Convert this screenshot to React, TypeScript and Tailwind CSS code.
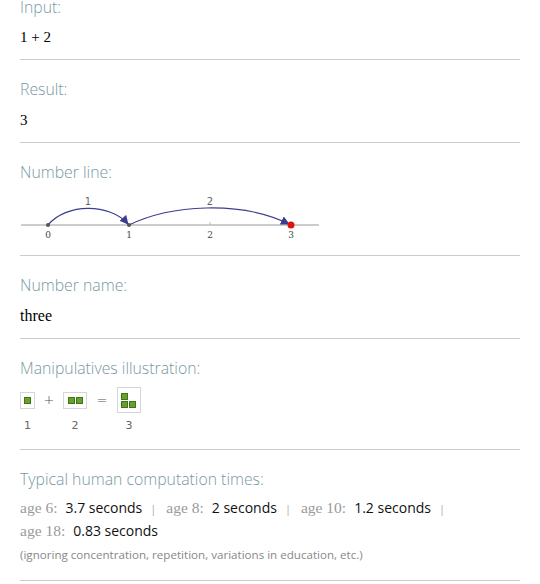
import React from "react";

const headerCls =
  "h-[20px] leading-[20px] text-[15.8px] font-light text-[#7898a2] font-['Open_Sans',sans-serif]";
const Divider = () => <div className="border-t border-[#cccccc] w-[500px]" />;

function GreenSq() {
  return <div className="w-[7px] h-[7px] bg-[#67a02c] border border-[#3f7417]" />;
}

function NumberLine() {
  const labelCls = { fontFamily: "'DejaVu Serif', serif", fontSize: 9, fill: "#444" } as React.CSSProperties;
  const arcLbl = { fontFamily: "'DejaVu Sans', sans-serif", fontSize: 10, fill: "#666" } as React.CSSProperties;
  return (
    <svg width="330" height="56" viewBox="0 0 330 56" className="block -ml-[20px]">
      <defs>
        <marker id="ah" viewBox="0 0 10 10" refX="9" refY="5" markerWidth="9" markerHeight="9" orient="auto" markerUnits="userSpaceOnUse">
          <path d="M0,0 L10,5 L0,10 z" fill="#3d3d8f" />
        </marker>
      </defs>
      <line x1="21" y1="35" x2="319" y2="35" stroke="#9a9a9a" strokeWidth="1" />
      <line x1="210" y1="32" x2="210" y2="35" stroke="#bbb" strokeWidth="1" />
      <path d="M48,35 C66,13 110,13 128,34" fill="none" stroke="#3d3d8f" strokeWidth="1.2" markerEnd="url(#ah)" />
      <path d="M129,35 C170,15 240,10 289,34" fill="none" stroke="#3d3d8f" strokeWidth="1.2" markerEnd="url(#ah)" />
      <circle cx="48" cy="35" r="2" fill="#555" />
      <circle cx="129" cy="35" r="2" fill="#555" />
      <circle cx="291" cy="35" r="3.5" fill="#e0140f" />
      <text x="88" y="15" textAnchor="middle" style={arcLbl}>1</text>
      <text x="210" y="15" textAnchor="middle" style={arcLbl}>2</text>
      <text x="48" y="48" textAnchor="middle" style={labelCls}>0</text>
      <text x="129" y="48" textAnchor="middle" style={labelCls}>1</text>
      <text x="210" y="48" textAnchor="middle" style={labelCls}>2</text>
      <text x="291" y="48" textAnchor="middle" style={labelCls}>3</text>
    </svg>
  );
}

const ageCls = "text-[#9a9a9a] font-['Liberation_Serif',serif] text-[15.5px]";
const valCls = "text-[#111] font-['Open_Sans',sans-serif] text-[14px]";
const sepCls = "text-[#aaa] text-[11px] font-['Open_Sans',sans-serif] pl-[8px] pr-[10px]";

export default function App() {
  const serif = "font-['Liberation_Serif',serif] text-[15px] text-black";
  return (
    <div className="bg-white w-[540px] h-[584px] overflow-hidden pl-[20px]">
      {/* Input */}
      <div className="-mt-[3px]">
        <div className={headerCls}>Input:</div>
        <div className={`mt-[10px] h-[20px] leading-[20px] ${serif}`}>1 + 2</div>
        <div className="mt-[12px]"><Divider /></div>
      </div>
      {/* Result */}
      <div className="pt-[19px]">
        <div className={headerCls}>Result:</div>
        <div className={`mt-[11px] h-[20px] leading-[20px] ${serif}`}>3</div>
        <div className="mt-[12px]"><Divider /></div>
      </div>
      {/* Number line */}
      <div className="pt-[19px]">
        <div className={headerCls}>Number line:</div>
        <div className="mt-[8px]">
          <NumberLine />
        </div>
        <div className="mt-[9px]"><Divider /></div>
      </div>
      {/* Number name */}
      <div className="pt-[19px]">
        <div className={headerCls}>Number name:</div>
        <div className="mt-[11px] h-[20px] leading-[20px] font-['Liberation_Serif',serif] text-[16px] text-black">three</div>
        <div className="mt-[12px]"><Divider /></div>
      </div>
      {/* Manipulatives */}
      <div className="pt-[19px]">
        <div className={headerCls}>Manipulatives illustration:</div>
        <div className="mt-[9px] flex items-center h-[26px]">
          <div className="w-[15px] h-[17px] border border-[#d6d6d6] flex items-center justify-center">
            <GreenSq />
          </div>
          <div className="w-[28px] text-center text-[13px] text-[#555] font-['DejaVu_Sans',sans-serif] font-extralight">+</div>
          <div className="w-[24px] h-[17px] border border-[#d6d6d6] flex items-center justify-center gap-[1px]">
            <GreenSq />
            <GreenSq />
          </div>
          <div className="w-[30px] text-center text-[13px] text-[#555] font-['DejaVu_Sans',sans-serif] font-extralight">=</div>
          <div className="w-[24px] h-[26px] border border-[#d6d6d6] flex flex-col justify-center pl-[3px] gap-[1px]">
            <GreenSq />
            <div className="flex gap-[1px]">
              <GreenSq />
              <GreenSq />
            </div>
          </div>
        </div>
        <div className="flex mt-[6px] h-[14px] leading-[14px] text-[11px] text-[#666] font-['DejaVu_Sans',sans-serif]">
          <div className="w-[15px] text-center">1</div>
          <div className="w-[28px]" />
          <div className="w-[24px] text-center">2</div>
          <div className="w-[30px]" />
          <div className="w-[24px] text-center">3</div>
        </div>
        <div className="mt-[16px]"><Divider /></div>
      </div>
      {/* Typical times */}
      <div className="pt-[19px]">
        <div className={headerCls}>Typical human computation times:</div>
        <div className="mt-[9px] h-[20px] leading-[20px] flex items-baseline whitespace-nowrap">
          <span className={ageCls}>age 6:</span>
          <span className={`${valCls} ml-[8px]`}>3.7 seconds</span>
          <span className={sepCls}>|</span>
          <span className={ageCls}>age 8:</span>
          <span className={`${valCls} ml-[8px]`}>2 seconds</span>
          <span className={sepCls}>|</span>
          <span className={ageCls}>age 10:</span>
          <span className={`${valCls} ml-[8px]`}>1.2 seconds</span>
          <span className={sepCls}>|</span>
        </div>
        <div className="mt-[3px] h-[20px] leading-[20px] flex items-baseline whitespace-nowrap">
          <span className={ageCls}>age 18:</span>
          <span className={`${valCls} ml-[8px]`}>0.83 seconds</span>
        </div>
        <div className="mt-[6px] h-[16px] leading-[16px] text-[11.6px] text-[#888] font-['Open_Sans',sans-serif]">
          (ignoring concentration, repetition, variations in education, etc.)
        </div>
        <div className="mt-[17px]"><Divider /></div>
      </div>
    </div>
  );
}
